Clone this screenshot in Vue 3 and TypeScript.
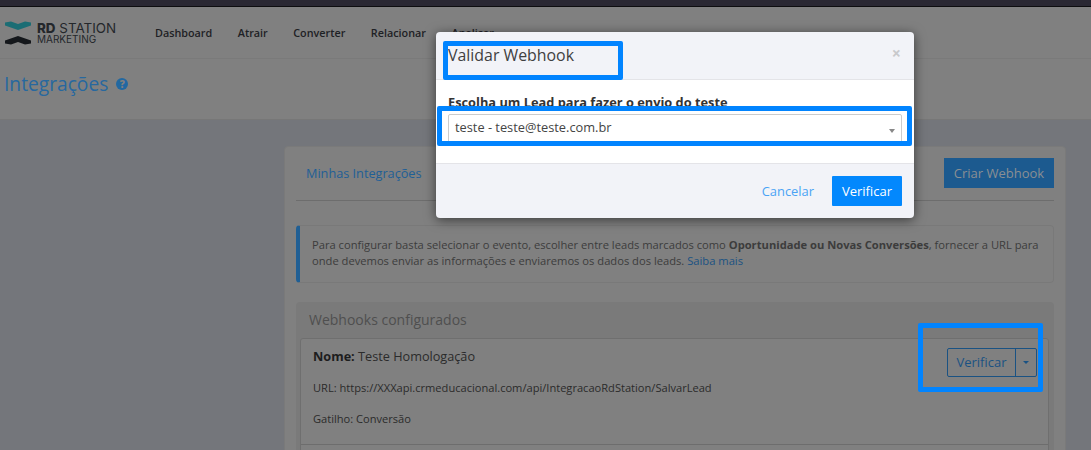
<script setup lang="ts">
const navItems: string[] = ['Dashboard', 'Atrair', 'Converter', 'Relacionar', 'Analisar']
</script>

<template>
  <div class="page">
    <div class="topstrip"></div>
    <header class="navbar">
      <div class="logo">
        <svg width="26" height="24" viewBox="0 0 26 24">
          <path d="M0 1.5 L6 0.5 L13 3 L20 0.5 L26 1.5 L26 4.5 L13 9 L0 4.5 Z" fill="#1b6d74" />
          <path d="M0 19.5 L13 15 L26 19.5 L26 22.5 L20 23.5 L13 21 L6 23.5 L0 22.5 Z" fill="#14171b" />
        </svg>
        <div class="logotext">
          <div class="rd"><b>RD</b> STATION</div>
          <div class="mk">MARKETING</div>
        </div>
      </div>
      <nav class="nav">
        <a v-for="item in navItems" :key="item">{{ item }}</a>
      </nav>
    </header>
    <section class="titlebar">
      <h1>Integrações</h1>
      <span class="help">?</span>
    </section>
    <main class="content">
      <div class="card">
        <div class="tabs">
          <a class="tab">Minhas Integrações</a>
          <button class="create">Criar Webhook</button>
        </div>
        <div class="alert">
          <div class="alert-line">Para configurar basta selecionar o evento, escolher entre leads marcados como <b>Oportunidade ou Novas Conversões</b>, fornecer a URL para</div>
          <div class="alert-line">onde devemos enviar as informações e enviaremos os dados dos leads. <a>Saiba mais</a></div>
        </div>
        <div class="panel">
          <div class="panel-title">Webhooks configurados</div>
          <div class="hook">
            <div class="hook-info">
              <div class="hook-name"><b>Nome:</b> Teste Homologação</div>
              <div class="hook-line">URL: https://XXXapi.crmeducacional.com/api/IntegracaoRdStation/SalvarLead</div>
              <div class="hook-line">Gatilho: Conversão</div>
            </div>
            <div class="split">
              <span class="split-main">Verificar</span>
              <span class="split-caret"><i></i></span>
            </div>
            <div class="mark mark-verify"></div>
          </div>
        </div>
      </div>
    </main>

    <div class="modal">
      <div class="modal-head">
        <span class="modal-title">Validar Webhook</span>
        <span class="close">×</span>
        <div class="mark mark-title"></div>
      </div>
      <div class="modal-body">
        <label>Escolha um Lead para fazer o envio do teste</label>
        <div class="select">
          <span>teste - teste@teste.com.br</span>
          <i></i>
        </div>
        <div class="mark mark-select"></div>
      </div>
      <div class="modal-foot">
        <a class="cancel">Cancelar</a>
        <button class="verify">Verificar</button>
      </div>
    </div>
  </div>
</template>

<style>
html, body { margin: 0; background: #74767b; }
</style>

<style scoped>
.page {
  position: relative;
  width: 1091px;
  height: 450px;
  overflow: hidden;
  background: #74767b;
  font-family: "Open Sans", sans-serif;
  color: #333;
}
.topstrip { height: 6px; background: #2a2833; border-bottom: 1px solid #0e0e10; }
.navbar {
  height: 51px;
  background: #808080;
  display: flex;
  align-items: center;
  padding-left: 5px;
  box-sizing: border-box;
  box-shadow: 0 1px 2px rgba(0,0,0,.08);
}
.logo { display: flex; align-items: center; gap: 6px; width: 150px; }
.logotext { color: #24272b; font-family: Inter, sans-serif; }
.rd { font-size: 13.4px; line-height: 12px; font-weight: 400; white-space: nowrap; }
.rd b { font-weight: 800; }
.mk { font-size: 10px; line-height: 10px; font-weight: 400; }
.nav { display: flex; gap: 25.5px; font-size: 10.8px; font-weight: 600; color: #1e2125; margin-top: -1px; }
.titlebar {
  height: 62px;
  background: #808080;
  border-top: 1px solid #7a7a7a;
  border-bottom: 1px solid #777;
  box-sizing: border-box;
  display: flex;
  align-items: center;
  gap: 8px;
  padding: 0 0 10px 4px;
}
.titlebar h1 { margin: 0; font-size: 19.2px; font-weight: 400; color: #27689f; line-height: 1; }
.help {
  width: 12px; height: 12px; border-radius: 50%;
  background: #2268a1; color: #808080;
  font-size: 10px; font-weight: 800; text-align: center; line-height: 12px;
}
.content { padding: 26px 25px 0 284px; }
.card {
  width: 782px;
  height: 320px;
  box-sizing: border-box;
  background: #808080;
  border: 1px solid #7a7a7a;
  border-radius: 4px;
  padding: 0 11px;
}
.tabs {
  height: 54px;
  display: flex;
  align-items: center;
  justify-content: space-between;
  border-bottom: 1px solid #6d6d6d;
  box-sizing: border-box;
  padding: 0 0 0 10px;
}
.tab { color: #1f5f96; font-size: 12.7px; margin-top: -1px; }
.create {
  width: 110px; height: 30px;
  border: 0; background: #1c5a8f; color: #8a8f93;
  font: 13px "Open Sans", sans-serif;
  margin-top: -1px;
  padding: 0;
}
.alert {
  margin-top: 24px;
  height: 58px;
  box-sizing: border-box;
  border: 1px solid #797979;
  border-left: 4px solid #205f94;
  border-radius: 4px;
  padding: 11px 12px 0 12px;
  font-size: 11.18px;
  line-height: 16px;
  color: #3c3c3c;
}
.alert-line { white-space: nowrap; }
.alert b { font-weight: 700; }
.alert a { color: #1a5283; }
.panel {
  margin-top: 19px;
  background: #7a7a7a;
  border-radius: 4px 4px 0 0;
  padding: 0 5px 0 4px;
  height: 200px;
}
.panel-title { height: 36px; line-height: 36px; padding-left: 9px; font-size: 14px; color: #4f4f4f; }
.hook {
  position: relative;
  height: 160px;
  background: #808080;
  border: 1px solid #6f6f6f;
  border-radius: 3px 3px 0 0;
  box-sizing: border-box;
  padding: 9px 12px;
}
.hook::after {
  content: "";
  position: absolute; left: 0; right: 0; top: 105px;
  border-top: 1px solid #6d6d6d;
}
.hook-name { font-size: 12.7px; color: #2b2b2b; line-height: 17px; }
.hook-name b { font-weight: 700; color: #1d1d1d; }
.hook-line { font-size: 11.1px; color: #2b2b2b; line-height: 14px; margin-top: 17px; }
.hook-name + .hook-line { margin-top: 16px; }
.split {
  position: absolute; top: 9px; right: 11px;
  display: flex; height: 29px; width: 90px;
  border: 1px solid #1a5283; border-radius: 2px; box-sizing: border-box;
  color: #1a5283; font-size: 13px;
}
.split-main { flex: 1; text-align: center; line-height: 26px; border-right: 1px solid #1a5283; }
.split-caret { width: 20px; display: flex; align-items: center; justify-content: center; }
.split-caret i { border: 3px solid transparent; border-top-color: #1a5283; border-bottom: 0; }
.mark { position: absolute; border: 5px solid #0184ff; border-radius: 2px; box-sizing: border-box; }
.mark-verify { left: 617px; top: -16px; width: 125px; height: 69px; }
.modal {
  position: absolute;
  left: 436px; top: 32px;
  width: 478px; height: 186px;
  background: #f2f3f8;
  border-radius: 4px;
  box-shadow: 0 2px 12px rgba(0,0,0,.55);
  display: flex;
  flex-direction: column;
}
.modal-head {
  position: relative;
  height: 48px;
  box-sizing: border-box;
  border-bottom: 1px solid #e4e4e8;
  padding: 13px 12px;
  display: flex;
  justify-content: space-between;
}
.modal-title { font-size: 15.9px; color: #404040; line-height: 20px; }
.close { font-size: 16px; font-weight: 700; color: #c8c9cc; line-height: 16px; margin: 0 1px 0 0; }
.mark-title { left: 7px; top: 9px; width: 180px; height: 39px; }
.modal-body {
  position: relative;
  height: 84px;
  box-sizing: border-box;
  background: #fff;
  border-bottom: 1px solid #e4e4e8;
  padding: 13px 12px 0;
}
.modal-body label { display: block; font-size: 12.8px; font-weight: 700; color: #333; line-height: 18px; }
.select {
  height: 32px; margin-top: 3px;
  border: 1px solid #ccc; border-radius: 2px;
  box-sizing: border-box;
  display: flex; align-items: center; justify-content: space-between;
  padding: 0 6px 6px 6px;
  font-size: 12.8px; color: #444;
}
.select i { border: 3px solid transparent; border-top: 4px solid #888; border-bottom: 0; margin-top: 8px; }
.mark-select { left: 1px; top: 26px; width: 475px; height: 40px; }
.modal-foot {
  flex: 1;
  display: flex; align-items: center; justify-content: flex-end;
  gap: 18px;
  padding: 0 12px;
}
.cancel { color: #4aa3f5; font-size: 12.9px; }
.verify {
  width: 70px; height: 30px;
  border: 0; background: #0388fd; color: #fff;
  font: 13px "Open Sans", sans-serif;
  border-radius: 1px;
  padding: 0;
}
</style>
